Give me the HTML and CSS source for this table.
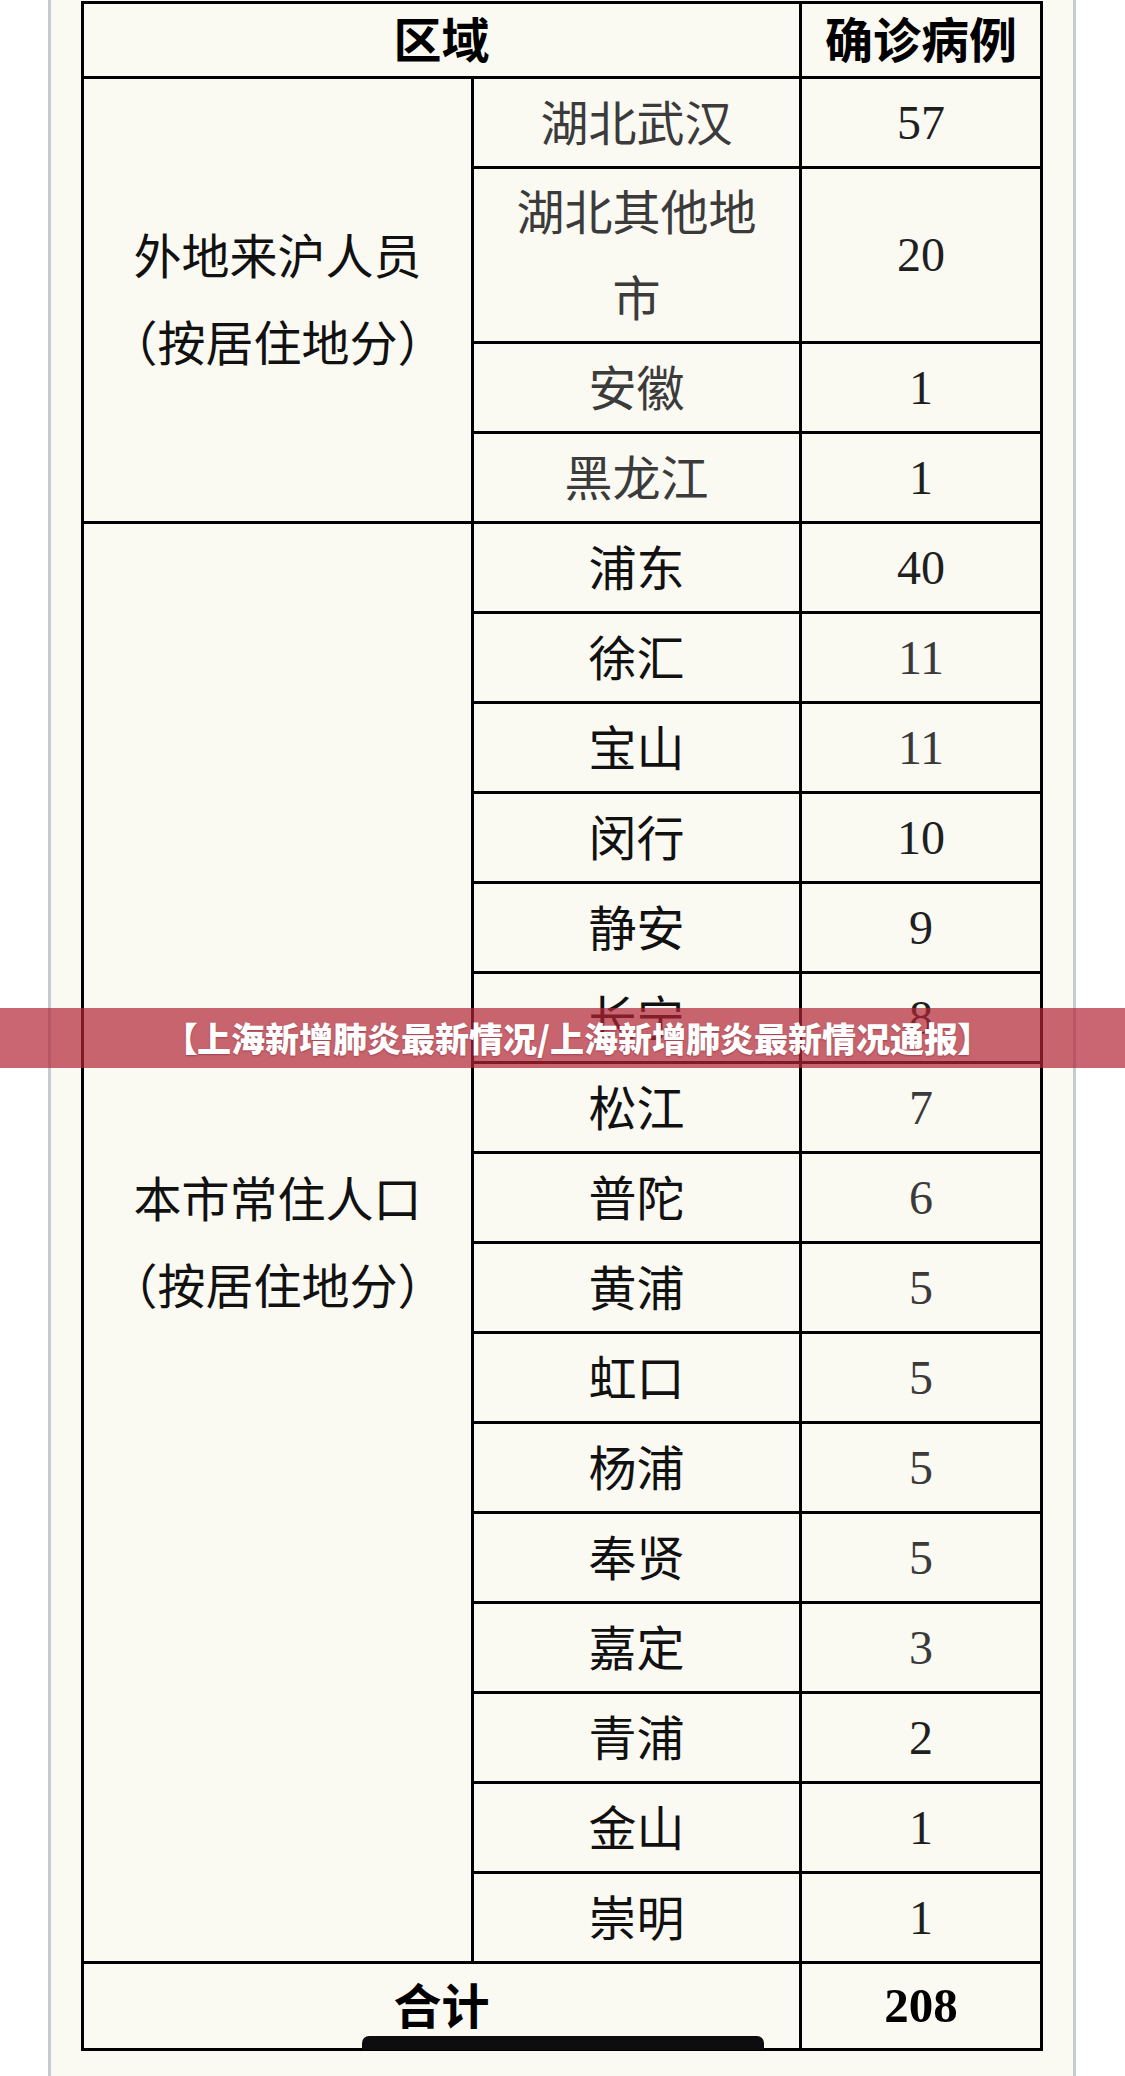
FILE: index.html
```html
<!DOCTYPE html>
<html lang="zh-CN">
<head>
<meta charset="utf-8">
<title>上海新增肺炎最新情况</title>
<link rel="stylesheet" href="styles.css">
</head>
<body>
<div class="page">
  <div class="sheet">
    <div class="grid">
      <div class="cell cjk head span2">区域</div>
      <div class="cell cjk head">确诊病例</div>

      <div class="cell cjk group g1">外地来沪人员<br>（按居住地分）</div>
      <div class="cell cjk area muted">湖北武汉</div><div class="cell num">57</div>
      <div class="cell cjk area muted two">湖北其他地<br>市</div><div class="cell num">20</div>
      <div class="cell cjk area muted">安徽</div><div class="cell num">1</div>
      <div class="cell cjk area muted">黑龙江</div><div class="cell num">1</div>

      <div class="cell cjk group g2">本市常住人口<br>（按居住地分）</div>
      <div class="cell cjk area">浦东</div><div class="cell num">40</div>
      <div class="cell cjk area">徐汇</div><div class="cell num light">11</div>
      <div class="cell cjk area">宝山</div><div class="cell num light">11</div>
      <div class="cell cjk area">闵行</div><div class="cell num">10</div>
      <div class="cell cjk area">静安</div><div class="cell num">9</div>
      <div class="cell cjk area">长宁</div><div class="cell num">8</div>
      <div class="cell cjk area">松江</div><div class="cell num light">7</div>
      <div class="cell cjk area">普陀</div><div class="cell num light">6</div>
      <div class="cell cjk area">黄浦</div><div class="cell num light">5</div>
      <div class="cell cjk area">虹口</div><div class="cell num light">5</div>
      <div class="cell cjk area">杨浦</div><div class="cell num light">5</div>
      <div class="cell cjk area">奉贤</div><div class="cell num light">5</div>
      <div class="cell cjk area">嘉定</div><div class="cell num light">3</div>
      <div class="cell cjk area">青浦</div><div class="cell num">2</div>
      <div class="cell cjk area">金山</div><div class="cell num">1</div>
      <div class="cell cjk area">崇明</div><div class="cell num">1</div>

      <div class="cell cjk head span2 total">合计</div>
      <div class="cell num bold">208</div>
    </div>
  </div>
  <div class="banner">【上海新增肺炎最新情况/上海新增肺炎最新情况通报】</div>
  <div class="home-bar"></div>
</div>
</body>
</html>
```

FILE: styles.css
```css
html, body {
  margin: 0;
  padding: 0;
  background: #ffffff;
}

.page {
  position: relative;
  width: 1125px;
  height: 2076px;
  overflow: hidden;
  background: #ffffff;
}

.sheet {
  margin-left: 48px;
  width: 1022px;
  height: 2076px;
  background: #faf9f2;
  border-left: 3px solid #c5ccd0;
  border-right: 3px solid #c5ccd0;
  padding-top: 1px;
  box-sizing: content-box;
}

.grid {
  margin-left: 30px;
  width: 956px;
  display: grid;
  grid-template-columns: 387px 325px 238px;
  grid-template-rows: 72px 87px 172px 87px 87px repeat(16, 87px) 84px;
  gap: 3px;
  padding: 3px;
  background: #000000;
}

.cell {
  background: #faf9f2;
  display: flex;
  align-items: center;
  justify-content: center;
  text-align: center;
  font-family: "Noto Sans CJK SC", "Noto Sans", sans-serif;
  font-size: 48px;
  line-height: 60px;
  color: #111111;
}

.cjk {
  padding-bottom: 6px;
}

.span2 {
  grid-column: span 2;
}

.head {
  font-weight: 700;
  color: #000000;
}

.group {
  line-height: 87px;
}

.g1 {
  grid-row: span 4;
}

.g2 {
  grid-row: span 16;
}

.area.muted {
  color: #3b3b3b;
}

.two {
  line-height: 86px;
}

.num {
  font-family: "Liberation Serif", "Times New Roman", serif;
  font-size: 48px;
  color: #1f1f1f;
}

.num.light {
  color: #3a3a3a;
}

.num.bold {
  font-weight: 700;
  color: #000000;
  font-size: 49px;
}

.banner {
  position: absolute;
  left: 0;
  top: 1008px;
  width: 1125px;
  height: 60px;
  box-sizing: border-box;
  padding-left: 30px;
  background: rgba(178, 37, 54, 0.7);
  color: #ffffff;
  font-family: "Noto Sans CJK SC", sans-serif;
  font-weight: 900;
  font-size: 34px;
  line-height: 60px;
  text-align: center;
  font-feature-settings: "palt" 1;
  text-shadow: 0 1px 2px rgba(90, 0, 15, 0.35);
  white-space: nowrap;
}

.home-bar {
  position: absolute;
  left: 362px;
  top: 2036px;
  width: 402px;
  height: 14px;
  background: #0d0d0f;
  border-radius: 7px 7px 0 0;
}
```
